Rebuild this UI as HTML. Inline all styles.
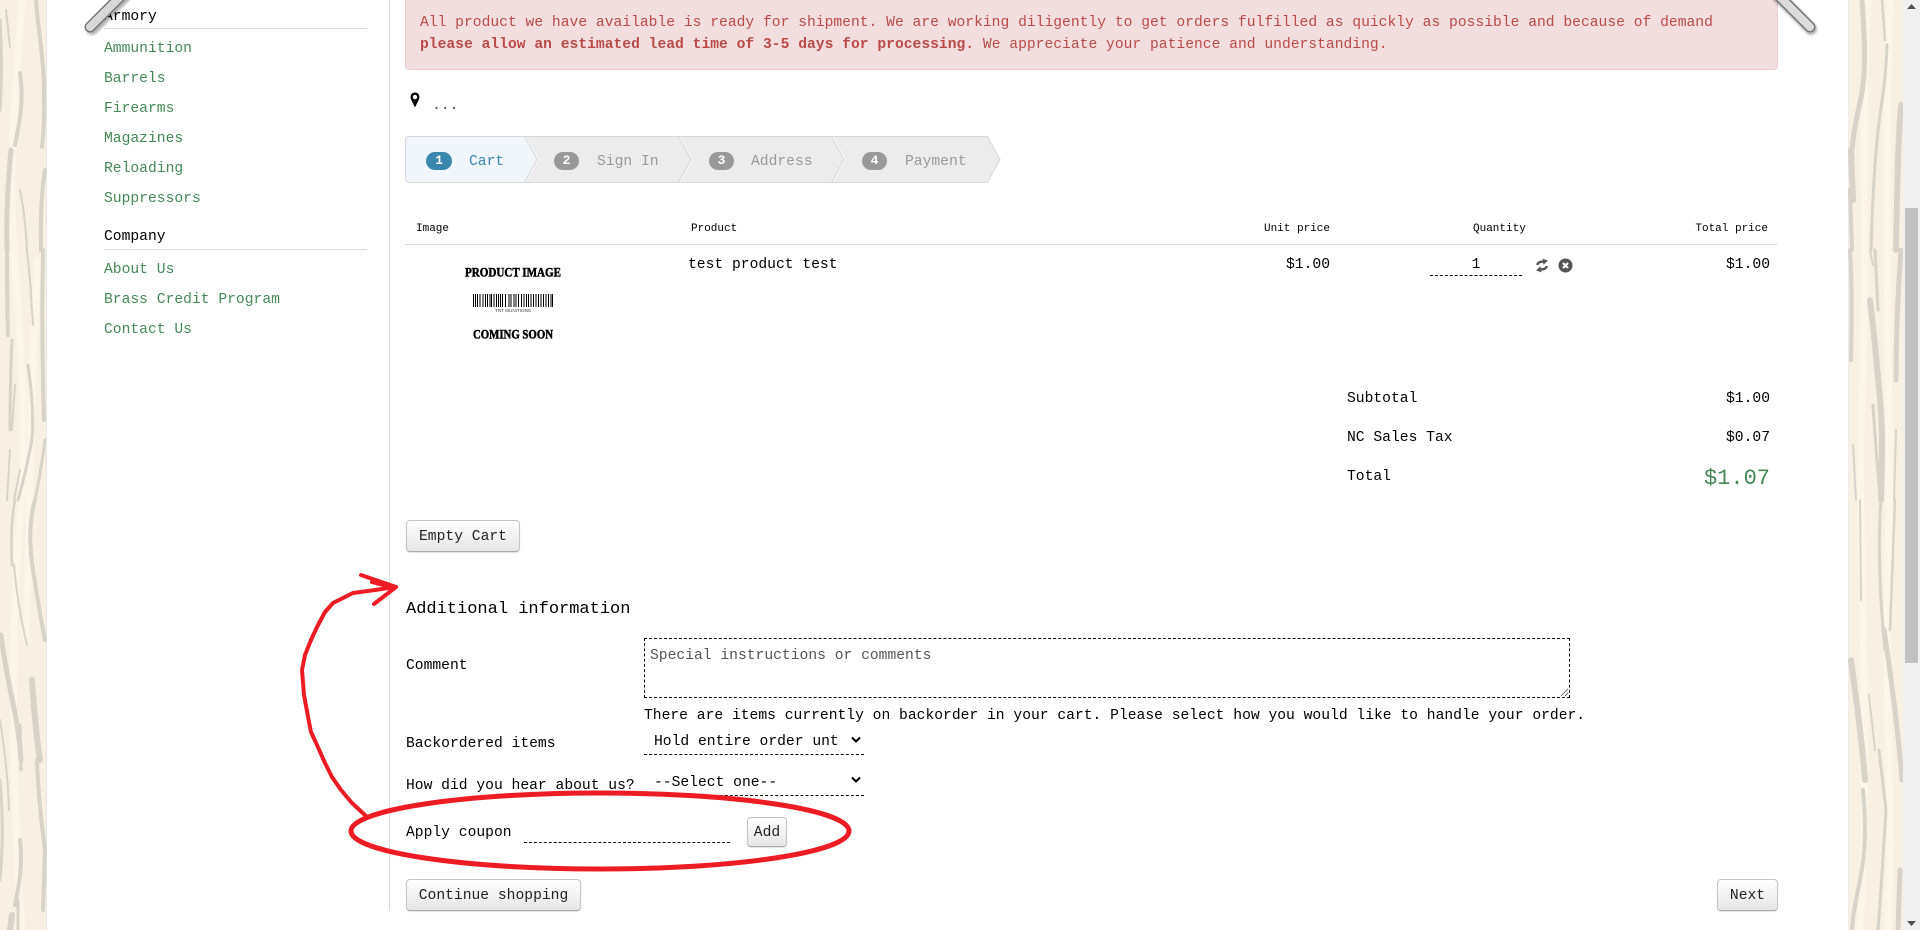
<!DOCTYPE html>
<html lang="en"><head><meta charset="utf-8"><title>Cart</title>
<style>
html,body{margin:0;padding:0;width:1920px;height:930px;overflow:hidden;background:#fff}
body{position:relative;font-family:"Liberation Mono",monospace;font-size:14.67px;color:#000}
.t{position:absolute;line-height:20px;white-space:pre;height:20px;margin-top:1px}
.x{margin-top:2px}
a{color:#468858;text-decoration:none}
.s{font-size:11px;color:#000}
.r{text-align:right}
.line{position:absolute;background:#ddd;height:1px}
.btn{position:absolute;box-sizing:border-box;font:14.67px "Liberation Mono",monospace;color:#222;border:1px solid #c4c4c4;border-bottom-color:#aaa;border-radius:4px;background:linear-gradient(#fff,#e6e6e6);box-shadow:0 1px 1px rgba(0,0,0,.12);padding:2px 0 0;text-align:center}
.f{position:absolute;box-sizing:border-box;border:0;border-bottom:1px dashed #000;background:transparent;font:14.67px "Liberation Mono",monospace;color:#000;outline:0;padding:0;appearance:none;-webkit-appearance:none;border-radius:0}
textarea::placeholder{color:#555;opacity:1}
</style></head><body>

<svg style="position:absolute;left:0;top:0" width="1920" height="930" fill="none" stroke-linecap="round">
<rect x="0" y="0" width="46" height="930" fill="#f8f1e3"/>
<rect x="46" y="0" width="1" height="930" fill="#e6e6e6"/>
<rect x="1848" y="0" width="1" height="930" fill="#ececec"/>
<rect x="1849" y="0" width="54" height="930" fill="#f8f1e3"/>
<g stroke="#fbf5ea" stroke-width="7">
<path d="M22 0C16 90 8 160 14 250S28 420 20 520 10 760 22 930"/>
<path d="M38 260C30 380 30 520 26 640"/>
<path d="M1868 0C1860 120 1868 260 1862 400S1872 700 1860 930"/>
<path d="M1890 0C1882 200 1892 400 1888 560S1894 800 1888 930"/>
</g>
<g stroke="#d8d3c8">
<path stroke-width="4" d="M36 0C38 30 44 60 44 90S44 130 42 147"/>
<path stroke-width="3" d="M0 20C2 50 2 80 0 110"/>
<path stroke-width="2" d="M6 10L10 47"/>
<path stroke-width="4" d="M20 73C24 100 20 120 15 145"/>
<path stroke-width="5" d="M11 150C8 180 6 220 7 250"/>
<path stroke-width="2" d="M20 190C24 210 26 230 27 250"/>
<path stroke-width="4" d="M45 170C40 200 41 230 41 250"/>
<path stroke-width="4" d="M7 250C7 280 7 310 8 335"/>
<path stroke-width="2" d="M27 250L31 290M30 280L33 325"/>
<path stroke-width="4" d="M43 250C42 300 42 360 44 420"/>
<path stroke-width="3" d="M45 440C42 465 38 485 35 500"/>
<path stroke-width="3" d="M12 340C10 380 10 410 10 430"/>
<path stroke-width="2" d="M15 385L12 430M10 450L7 500M20 470L14 500"/>
<path stroke-width="3" d="M28 365C33 400 34 430 31 445S24 480 18 500"/>
<path stroke-width="2.5" d="M15 500C11 520 11 545 12 565"/>
<path stroke-width="4" d="M35 500C28 525 30 550 33 570S41 620 45 640"/>
<path stroke-width="2" d="M14 565C16 590 21 620 27 645"/>
<path stroke-width="5" d="M1 635C5 670 13 700 17 725S20 750 21 760"/>
<path stroke-width="6" d="M32 680C34 710 37 740 40 760"/>
<path stroke-width="4" d="M37 760C38 790 41 820 45 850L43 910"/>
<path stroke-width="3" d="M20 725L21 770"/>
<path stroke-width="2" d="M0 720C4 745 8 780 9 810"/>
<path stroke-width="3" d="M0 780C3 810 3 850 0 880"/>
<path stroke-width="4" d="M20 840C23 865 19 885 15 905"/>
<path stroke-width="6" d="M12 915L10 930"/>
<path stroke-width="3" d="M18 900L18 930"/>

<path stroke-width="5" d="M1862 0C1864 30 1866 60 1863 85S1856 110 1852 150"/>
<path stroke-width="2.5" d="M1882 0L1885 40"/>
<path stroke-width="3" d="M1887 45C1886 75 1883 95 1880 115S1873 180 1871 250"/>
<path stroke-width="6" d="M1901 105C1898 140 1897 190 1896 250"/>
<path stroke-width="6" d="M1851 150L1853 200"/>
<path stroke-width="4" d="M1850 190L1852 250"/>
<path stroke-width="4" d="M1850 250C1852 280 1852 320 1851 360"/>
<path stroke-width="2" d="M1870 250L1873 265"/>
<path stroke-width="3" d="M1875 250L1878 310"/>
<path stroke-width="6" d="M1870 300C1873 325 1877 365 1880 400S1882 450 1881 500"/>
<path stroke-width="5" d="M1901 250C1898 290 1896 340 1896 380"/>
<path stroke-width="3" d="M1873 405C1875 440 1878 470 1880 500"/>
<path stroke-width="2" d="M1853 445L1856 500M1896 430L1894 500M1860 500L1861 600"/>
<path stroke-width="3" d="M1881 500C1878 535 1879 590 1885 650"/>
<path stroke-width="2.5" d="M1895 500L1890 630"/>
<path stroke-width="5" d="M1884 630C1890 670 1898 730 1902 780"/>
<path stroke-width="6" d="M1851 660C1855 690 1862 740 1865 780"/>
<path stroke-width="2" d="M1869 695L1875 750"/>
<path stroke-width="3" d="M1879 750L1886 810C1884 845 1881 890 1878 930"/>
<path stroke-width="4" d="M1863 790C1866 825 1866 850 1860 880S1853 915 1852 930"/>
<path stroke-width="5" d="M1900 870L1898 930"/>
</g>
<rect x="1903" y="0" width="17" height="930" fill="#f1f1f1"/>
<rect x="1905" y="208" width="13" height="455" fill="#c1c1c1"/>
<path d="M1907 9L1911.5 4L1916 9Z M1907 921L1916 921L1911.5 926Z" fill="#505050"/>
<rect x="389" y="0" width="1" height="911" fill="#ddd"/>
</svg>

<div class="t" style="left:104px;top:6px">Armory</div>
<div class="line" style="left:104px;top:28px;width:263px"></div>
<div class="t" style="left:104px;top:38px"><a>Ammunition</a></div>
<div class="t" style="left:104px;top:68px"><a>Barrels</a></div>
<div class="t" style="left:104px;top:98px"><a>Firearms</a></div>
<div class="t" style="left:104px;top:128px"><a>Magazines</a></div>
<div class="t" style="left:104px;top:158px"><a>Reloading</a></div>
<div class="t" style="left:104px;top:188px"><a>Suppressors</a></div>
<div class="t" style="left:104px;top:226px">Company</div>
<div class="line" style="left:104px;top:249px;width:263px"></div>
<div class="t" style="left:104px;top:259px"><a>About Us</a></div>
<div class="t" style="left:104px;top:289px"><a>Brass Credit Program</a></div>
<div class="t" style="left:104px;top:319px"><a>Contact Us</a></div>

<div style="position:absolute;left:405px;top:-10px;width:1373px;height:80px;box-sizing:border-box;background:#f2dede;border:1px solid #ebccd1;border-radius:4px"></div>
<div class="t" style="left:420px;top:12px;color:#b94a48">All product we have available is ready for shipment. We are working diligently to get orders fulfilled as quickly as possible and because of demand</div>
<div class="t" style="left:420px;top:34px;color:#b94a48"><b>please allow an estimated lead time of 3-5 days for processing.</b> We appreciate your patience and understanding.</div>

<svg style="position:absolute;left:409px;top:92px" width="12" height="16" viewBox="0 0 12 16"><path fill-rule="evenodd" fill="#000" d="M6 0.5C3.4 0.5 1.6 2.4 1.6 5C1.6 8 4.8 12.5 6 15.5C7.2 12.5 10.4 8 10.4 5C10.4 2.4 8.6 0.5 6 0.5ZM6 2.9A2.2 2.2 0 1 1 6 7.3A2.2 2.2 0 1 1 6 2.9Z"/></svg>
<div class="t x" style="left:432px;top:94px;color:#555">...</div>

<svg style="position:absolute;left:400px;top:130px" width="620" height="60" viewBox="400 130 620 60" fill="none">
<path d="M409.5 136.5H987.5L1000 159.5L987.5 182.5H409.5Q405.5 182.5 405.5 178.5V140.5Q405.5 136.5 409.5 136.5Z" fill="#ececec" stroke="#d8d8d8"/>
<path d="M409.5 136.5H524.5L537 159.5L524.5 182.5H409.5Q405.5 182.5 405.5 178.5V140.5Q405.5 136.5 409.5 136.5Z" fill="#f0f6fc" stroke="#d8d8d8"/>
<path d="M678.5 136.5L691 159.5L678.5 182.5M831.5 136.5L844 159.5L831.5 182.5" stroke="#d8d8d8" fill="none"/>
<path d="M680 137L692.5 159.5L680 182M833 137L845.5 159.5L833 182M526 137L538.5 159.5L526 182" stroke="#f8f8f8" fill="none"/>
<rect x="426" y="152" width="26" height="18" rx="9" fill="#3a87ad"/>
<rect x="554" y="152" width="25" height="18" rx="9" fill="#999"/>
<rect x="709" y="152" width="25" height="18" rx="9" fill="#999"/>
<rect x="862" y="152" width="25" height="18" rx="9" fill="#999"/>
</svg>
<div class="t" style="left:426px;top:150px;width:26px;text-align:center;color:#fff;font-weight:bold;font-size:13px">1</div>
<div class="t" style="left:554px;top:150px;width:25px;text-align:center;color:#fff;font-weight:bold;font-size:13px">2</div>
<div class="t" style="left:709px;top:150px;width:25px;text-align:center;color:#fff;font-weight:bold;font-size:13px">3</div>
<div class="t" style="left:862px;top:150px;width:25px;text-align:center;color:#fff;font-weight:bold;font-size:13px">4</div>
<div class="t x" style="left:469px;top:150px;color:#3a87ad">Cart</div>
<div class="t x" style="left:597px;top:150px;color:#999">Sign In</div>
<div class="t x" style="left:751px;top:150px;color:#999">Address</div>
<div class="t x" style="left:905px;top:150px;color:#999">Payment</div>

<div class="t s" style="left:416px;top:218px">Image</div>
<div class="t s" style="left:691px;top:218px">Product</div>
<div class="t s r" style="left:1230px;top:218px;width:100px">Unit price</div>
<div class="t s" style="left:1473px;top:218px">Quantity</div>
<div class="t s r" style="left:1668px;top:218px;width:100px">Total price</div>
<div class="line" style="left:405px;top:244px;width:1373px"></div>

<svg style="position:absolute;left:460px;top:262px" width="106" height="82" viewBox="460 262 106 82">
<text x="465" y="276.5" font-family="Liberation Serif,serif" font-weight="bold" font-size="12.5" fill="#000" textLength="96" lengthAdjust="spacingAndGlyphs" stroke="#000" stroke-width=".5">PRODUCT IMAGE</text>
<text x="473" y="338.5" font-family="Liberation Serif,serif" font-weight="bold" font-size="12.5" fill="#000" textLength="80" lengthAdjust="spacingAndGlyphs" stroke="#000" stroke-width=".5">COMING SOON</text>
<text x="495" y="312" font-family="Liberation Sans,sans-serif" font-size="4.5" fill="#444" textLength="36" lengthAdjust="spacingAndGlyphs">TNT MUNITIONS</text>
<path stroke="#000" d="M473.5 294V307M475.5 294V307M477.5 294V307M480 294V307M483 294V307M485.5 294V307M487.5 294V307M490 294V307M491.5 294V307M494 294V307M496.5 294V307M498.5 294V307M500.5 294V307M502.5 294V307M505.5 294V307M509 294V307M511 294V307M514 294V307M516 294V307M518.5 294V307M521.5 294V307M524 294V307M526.5 294V307M528.5 294V307M531 294V307M533.5 294V307M536 294V307M538.5 294V307M541 294V307M543.5 294V307M546 294V307M548.5 294V307M551 294V307M552.5 294V307"/>
</svg>

<div class="t" style="left:688px;top:254px">test product test</div>
<div class="t r" style="left:1230px;top:254px;width:100px">$1.00</div>
<input class="f" value="1" style="left:1430px;top:254px;width:92px;height:22px;text-align:center">
<svg style="position:absolute;left:1535px;top:258px" width="14" height="15" viewBox="0 0 14 15" fill="none"><path d="M2.4 7C2.6 4.6 4.6 3.6 8.4 3.6" stroke="#555" stroke-width="2.4"/><path d="M7.6 0.6L13 2.6L8.4 6.8Z" fill="#555"/><path d="M11.6 8C11.4 10.4 9.4 11.4 5.6 11.4" stroke="#555" stroke-width="2.4"/><path d="M6.4 14.4L1 12.4L5.6 8.2Z" fill="#555"/></svg>
<svg style="position:absolute;left:1558px;top:258px" width="15" height="15" viewBox="0 0 15 15"><circle cx="7.5" cy="7.5" r="7" fill="#555"/><path d="M5 5L10 10M10 5L5 10" stroke="#fff" stroke-width="2.2"/></svg>
<div class="t r" style="left:1670px;top:254px;width:100px">$1.00</div>

<div class="t" style="left:1347px;top:388px">Subtotal</div>
<div class="t r" style="left:1670px;top:388px;width:100px">$1.00</div>
<div class="t" style="left:1347px;top:427px">NC Sales Tax</div>
<div class="t r" style="left:1670px;top:427px;width:100px">$0.07</div>
<div class="t" style="left:1347px;top:466px">Total</div>
<div class="t r x" style="left:1600px;top:467px;width:170px;font-size:22px;color:#468858">$1.07</div>

<button class="btn" style="left:406px;top:520px;width:114px;height:32px">Empty Cart</button>

<div class="t x" style="left:406px;top:598px;font-size:17px">Additional information</div>
<div class="t" style="left:406px;top:655px">Comment</div>
<textarea class="f" placeholder="Special instructions or comments" style="left:644px;top:638px;width:926px;height:60px;border:1px dashed #000;padding:9px 5px;resize:both"></textarea>
<div class="t x" style="left:644px;top:704px">There are items currently on backorder in your cart. Please select how you would like to handle your order.</div>
<div class="t" style="left:406px;top:733px">Backordered items</div>
<select class="f" style="left:644px;top:730px;width:220px;height:25px;padding-left:10px"><option>Hold entire order unt</option></select>
<svg style="position:absolute;left:850px;top:736px" width="12" height="8" fill="none" stroke="#000" stroke-width="2"><path d="M2 1.5L6 5.5L10 1.5"/></svg>
<div class="t x" style="left:406px;top:774px">How did you hear about us?</div>
<select class="f" style="left:644px;top:770px;width:220px;height:26px;padding-left:10px"><option>--Select one--</option></select>
<svg style="position:absolute;left:850px;top:776px" width="12" height="8" fill="none" stroke="#000" stroke-width="2"><path d="M2 1.5L6 5.5L10 1.5"/></svg>
<div class="t" style="left:406px;top:822px">Apply coupon</div>
<input class="f" style="left:524px;top:820px;width:206px;height:23px">
<button class="btn" style="left:747px;top:817px;width:40px;height:30px">Add</button>

<button class="btn" style="left:406px;top:879px;width:175px;height:32px">Continue shopping</button>
<button class="btn" style="left:1717px;top:879px;width:61px;height:32px">Next</button>

<svg style="position:absolute;left:0;top:0;pointer-events:none" width="1920" height="930" fill="none">
<defs><filter id="b" x="-30%" y="-30%" width="160%" height="160%"><feGaussianBlur stdDeviation="1.2"/></filter></defs>
<g stroke-linecap="round">
<path d="M92 29L126 -5" stroke="#000" stroke-opacity=".3" stroke-width="12" filter="url(#b)"/>
<path d="M90 27L124 -7" stroke="#777" stroke-width="11"/>
<path d="M90 27L124 -7" stroke="#d8d8d8" stroke-width="8"/>
<path d="M1811 29L1776 -6" stroke="#000" stroke-opacity=".3" stroke-width="12" filter="url(#b)"/>
<path d="M1810 27L1775 -8" stroke="#777" stroke-width="11"/>
<path d="M1810 27L1775 -8" stroke="#dcdcdc" stroke-width="8"/>
</g>
<g stroke="#ed1c24" stroke-linejoin="round" stroke-linecap="round">
<ellipse cx="600" cy="831" rx="249" ry="38" stroke-width="5"/>
<path stroke-width="4" d="M366 816L352 803L341 790L332 777L325 763L317 745L311 732L309 722L304 695L302 670L305 655L311 640L317 627L325 612L333 603L345 597L353 593L375 590L396 587"/>
<path stroke-width="4" d="M361 575L396 587L374 604M372 582L394 588"/>
</g>
</svg>
</body></html>
